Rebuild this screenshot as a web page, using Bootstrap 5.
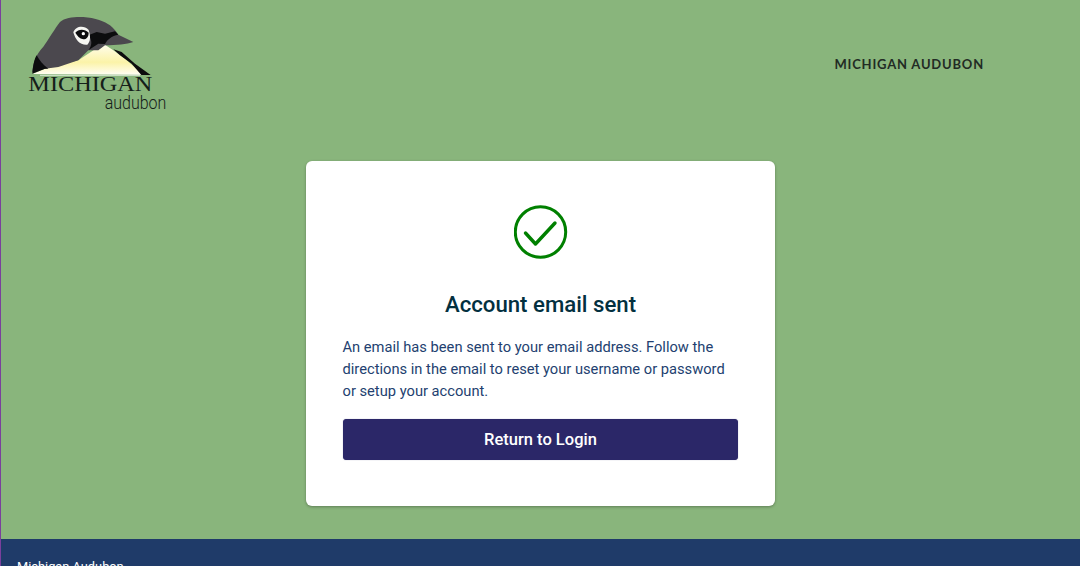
<!DOCTYPE html>
<html lang="en">
<head>
<meta charset="utf-8">
<title>Account email sent</title>
<link href="https://cdn.jsdelivr.net/npm/bootstrap@5.3.0/dist/css/bootstrap.min.css" rel="stylesheet">
<style>
html,body{height:566px;overflow:hidden}
body{background:#89b57c;font-family:Roboto,sans-serif;border-left:1px solid #7a3f9d}
.site-head{height:161px}
.logo-svg{width:200px;height:125px;margin-left:-1px;flex:none}
.brand-link{font-family:Lato,sans-serif;font-weight:700;font-size:13px;letter-spacing:.8px;color:#222b24;margin-top:56px;margin-right:96px;line-height:16px}
.sent-card{width:469px;height:345px;background:#fff;border-radius:6px;box-shadow:0 1px 3px rgba(0,0,0,.3);padding:44px 37px 0 37px}
.sent-title{font-size:22.2px;font-weight:500;color:#03303f;line-height:26px;margin:32px 0 19px}
.sent-text{font-size:14.7px;line-height:22px;color:#233f70;margin-bottom:17px;margin-left:-.5px}
.return-btn{background:#2b2768;border:1px solid #2b2768;color:#fff;font-size:16.5px;font-weight:500;height:40.5px;border-radius:3px;padding:0;line-height:39px;box-shadow:0 0 1px rgba(43,39,104,.5)}
.return-btn:hover{background:#2b2768;color:#fff}
.site-foot{height:27px;background:#1f3b69;color:#fff;font-size:12.8px;margin-top:33px;padding:20px 0 0 16px;line-height:16px}
.logo-word{font-family:"Liberation Serif",serif;font-size:64px;fill:#15201a}
.logo-sub{font-family:Roboto,sans-serif;font-size:55px;fill:#15201a;font-weight:300}
</style>
</head>
<body>
<header class="site-head d-flex justify-content-between align-items-start">
<svg class="logo-svg" viewBox="0 0 600 375" role="img" aria-label="Michigan Audubon logo">
<defs><linearGradient id="chest" x1="0" y1="0" x2="0" y2="1"><stop offset="0" stop-color="#fffef0"/><stop offset=".6" stop-color="#fbf3a8"/><stop offset="1" stop-color="#fffef4"/></linearGradient></defs>
<path d="M97 222 L135 206 L235 181 L310 131 L340 151 L375 176 L430 224 Z" fill="url(#chest)"/>
<path d="M97 216 C100 190 105 166 130 140 C148 115 165 85 180 66 C195 52 225 50 250 51 C285 53 315 65 330 76 C342 86 350 96 355 104 L400 126 C380 133 350 135 315 136 L295 151 L265 151 L235 181 L175 201 L135 206 Z" fill="#4b484e"/>
<path d="M97 221 C99 195 103 178 110 166 C118 180 128 195 145 206 L135 206 Z" fill="#0c0c0e"/>
<path d="M265 106 L290 96 L315 101 L345 94 L355 104 C335 108 322 118 315 132 L295 131 L265 151 C276 138 278 120 265 106 Z" fill="#0c0c0e"/>
<path d="M340 148 L365 156 L405 191 L452 225 L424 225 L395 191 L360 166 Z" fill="#0c0c0e"/>
<path d="M120 226 L420 226" stroke="#fff" stroke-width="2"/>
<path d="M220 97 C226 78 252 74 266 90 C272 108 272 124 262 134 C240 136 226 120 220 97 Z" fill="#f6f6f2"/>
<path d="M226 98 C235 86 255 86 266 98 C266 110 260 118 250 118 C238 116 232 108 226 98 Z" fill="#0c0c0e"/>
<circle cx="250" cy="101" r="5" fill="#fff"/>
<text class="logo-word" x="85" y="272" textLength="372" lengthAdjust="spacingAndGlyphs">MICHIGAN</text>
<text class="logo-sub" x="314" y="326" textLength="185" lengthAdjust="spacingAndGlyphs">audubon</text>
</svg>
<div class="brand-link">MICHIGAN AUDUBON</div>
</header>
<main class="d-flex justify-content-center">
<div class="sent-card text-center">
<svg width="54" height="54" viewBox="0 0 54 54" class="d-block mx-auto" aria-hidden="true"><circle cx="26.5" cy="27" r="25.2" fill="none" stroke="#008000" stroke-width="3"/><path d="M11.5 28 L21.5 39 L41 18" fill="none" stroke="#008000" stroke-width="3.4" stroke-linecap="round" stroke-linejoin="round"/></svg>
<h1 class="sent-title">Account email sent</h1>
<p class="sent-text text-start">An email has been sent to your email address. Follow the directions in the email to reset your username or password or setup your account.</p>
<a href="#" class="btn return-btn d-block w-100">Return to Login</a>
</div>
</main>
<footer class="site-foot">Michigan Audubon</footer>
</body>
</html>
